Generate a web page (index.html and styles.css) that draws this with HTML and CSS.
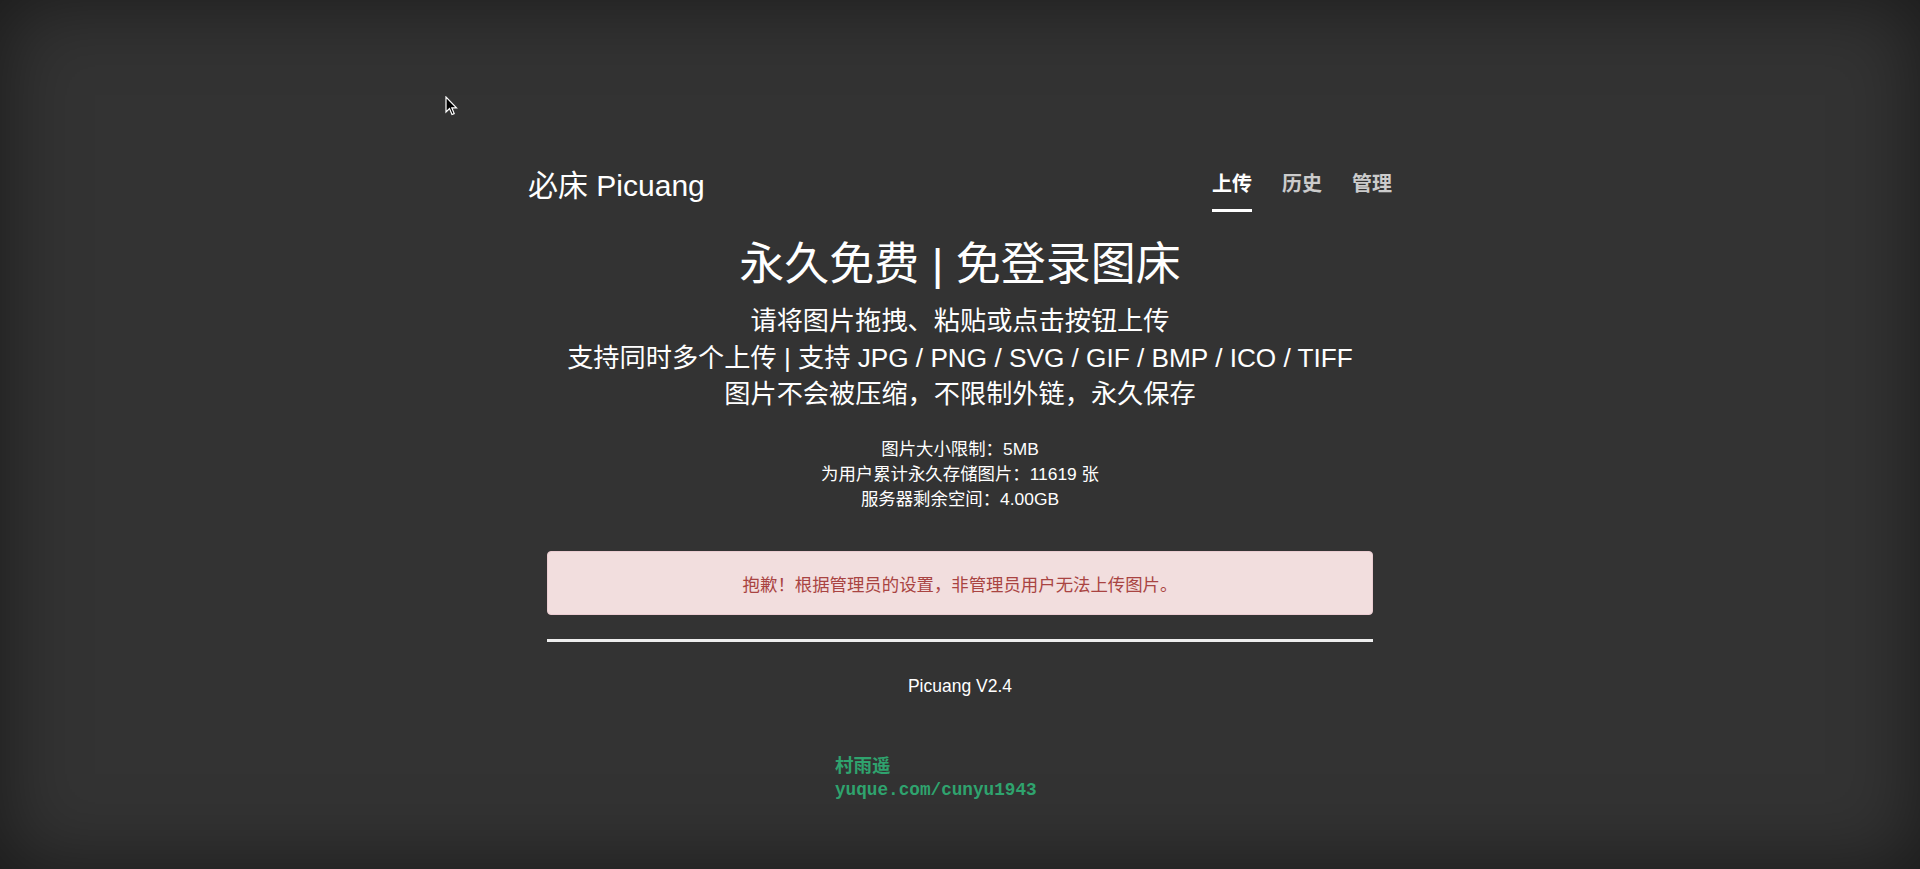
FILE: index.html
```html
<!DOCTYPE html>
<html lang="zh-CN">
<head>
<meta charset="utf-8">
<title>必床 Picuang</title>
<link rel="stylesheet" href="styles.css">
</head>
<body>
<div class="cover">
  <header class="masthead">
    <h3 class="brand">必床 Picuang</h3>
    <nav class="nav">
      <a class="nav-link active" href="#">上传</a>
      <a class="nav-link" href="#">历史</a>
      <a class="nav-link" href="#">管理</a>
    </nav>
  </header>
  <main class="inner">
    <h1 class="title">永久免费 | 免登录图床</h1>
    <div class="lead">
      <p>请将图片拖拽、粘贴或点击按钮上传</p>
      <p>支持同时多个上传 | 支持 JPG / PNG / SVG / GIF / BMP / ICO / TIFF</p>
      <p>图片不会被压缩，不限制外链，永久保存</p>
    </div>
    <div class="stats">
      <p>图片大小限制：5MB</p>
      <p>为用户累计永久存储图片：11619 张</p>
      <p>服务器剩余空间：4.00GB</p>
    </div>
    <div class="alert">抱歉！根据管理员的设置，非管理员用户无法上传图片。</div>
    <hr class="rule">
    <footer class="footer">Picuang V2.4</footer>
  </main>
</div>
<div class="watermark">
  <div class="wm-name">村雨遥</div>
  <div class="wm-url">yuque.com/cunyu1943</div>
</div>
<svg class="cursor" width="13" height="21" viewBox="0 0 13 21" aria-hidden="true">
  <path d="M1 1 L1 16 L4.5 12.5 L7 18.5 L9.2 17.6 L6.8 11.8 L11.5 11.8 Z" fill="#000" stroke="#fff" stroke-width="1.2" stroke-linejoin="miter"/>
</svg>
</body>
</html>
```
FILE: styles.css
```css
html, body {
  height: 100%;
  margin: 0;
}
body {
  background: #333;
  color: #fff;
  font-family: "Liberation Sans", "Noto Sans CJK SC", sans-serif;
  box-shadow: inset 0 0 80px rgba(0, 0, 0, 0.5);
  overflow: hidden;
}
.cover {
  width: 864px;
  margin: 0 auto;
  padding-top: 168px;
  display: flex;
  flex-direction: column;
}
.masthead {
  display: flex;
  justify-content: space-between;
  align-items: flex-start;
}
.brand {
  margin: 0;
  font-size: 30px;
  line-height: 36px;
  font-weight: 400;
}
.nav {
  display: flex;
  gap: 30px;
}
.nav-link {
  font-size: 20px;
  line-height: 24px;
  font-weight: 700;
  color: rgba(255, 255, 255, 0.75);
  text-decoration: none;
  padding-top: 4px;
  padding-bottom: 13px;
  border-bottom: 3px solid transparent;
}
.nav-link.active {
  color: #fff;
  border-bottom-color: #fff;
}
.inner {
  display: flex;
  flex-direction: column;
  align-items: center;
  text-align: center;
}
.title {
  margin: 27px 0 0;
  font-size: 45px;
  line-height: 52px;
  font-weight: 400;
}
.lead {
  margin-top: 12px;
  font-size: 26.2px;
  line-height: 36.5px;
}
.lead p, .stats p {
  margin: 0;
}
.stats {
  margin-top: 24px;
  font-size: 17.4px;
  line-height: 25.3px;
}
.alert {
  margin-top: 39px;
  width: 826px;
  box-sizing: border-box;
  height: 64px;
  display: flex;
  align-items: center;
  justify-content: center;
  background: #f2dede;
  border: 1px solid #ebccd1;
  border-radius: 4px;
  color: #a94442;
  font-size: 17.4px;
}
.rule {
  width: 826px;
  margin: 24px 0 0;
  border: 0;
  height: 3px;
  background: #eee;
}
.footer {
  margin-top: 32px;
  font-size: 17.5px;
  line-height: 24px;
}
.watermark {
  position: absolute;
  left: 835px;
  top: 754px;
  color: #2fa36e;
  font-weight: 700;
}
.wm-name {
  font-size: 18.5px;
  line-height: 24px;
}
.wm-url {
  font-family: "Liberation Mono", monospace;
  font-size: 17.7px;
  line-height: 25px;
}
.cursor {
  position: absolute;
  left: 445px;
  top: 96px;
}
```
